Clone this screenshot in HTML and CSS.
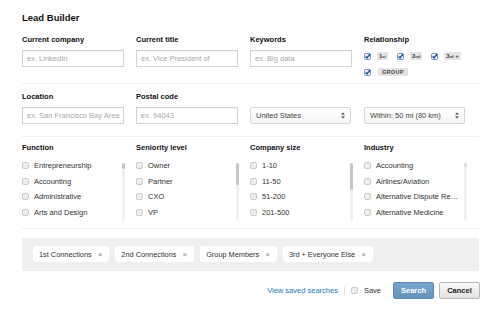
FILE: index.html
```html
<!DOCTYPE html>
<html>
<head>
<meta charset="utf-8">
<link rel="stylesheet" href="styles.css">
</head>
<body>
<div class="page">
  <h1 class="title">Lead Builder</h1>

  <section class="row row-1">
    <div class="field">
      <div class="label">Current company</div>
      <div class="input">ex. LinkedIn</div>
    </div>
    <div class="field">
      <div class="label">Current title</div>
      <div class="input">ex. Vice President of</div>
    </div>
    <div class="field">
      <div class="label">Keywords</div>
      <div class="input">ex. Big data</div>
    </div>
    <div class="field">
      <div class="label">Relationship</div>
      <div class="rel-rows">
        <div class="rel-row">
          <span class="pair">
            <svg class="chk-on" width="7" height="7" viewBox="0 0 7 7"><rect x=".5" y=".5" width="6" height="6" rx="1" fill="#e8f0fa" stroke="#7f97b6"/><path d="M1.6 3.4 L3 5 L6.2 0.8" fill="none" stroke="#1d4b94" stroke-width="1.4"/></svg>
            <span class="badge">1<small>st</small></span>
          </span>
          <span class="pair">
            <svg class="chk-on" width="7" height="7" viewBox="0 0 7 7"><rect x=".5" y=".5" width="6" height="6" rx="1" fill="#e8f0fa" stroke="#7f97b6"/><path d="M1.6 3.4 L3 5 L6.2 0.8" fill="none" stroke="#1d4b94" stroke-width="1.4"/></svg>
            <span class="badge">2<small>nd</small></span>
          </span>
          <span class="pair pair-last">
            <svg class="chk-on" width="7" height="7" viewBox="0 0 7 7"><rect x=".5" y=".5" width="6" height="6" rx="1" fill="#e8f0fa" stroke="#7f97b6"/><path d="M1.6 3.4 L3 5 L6.2 0.8" fill="none" stroke="#1d4b94" stroke-width="1.4"/></svg>
            <span class="badge">3<small>rd</small> +</span>
          </span>
        </div>
        <div class="rel-row">
          <span class="pair">
            <svg class="chk-on" width="7" height="7" viewBox="0 0 7 7"><rect x=".5" y=".5" width="6" height="6" rx="1" fill="#e8f0fa" stroke="#7f97b6"/><path d="M1.6 3.4 L3 5 L6.2 0.8" fill="none" stroke="#1d4b94" stroke-width="1.4"/></svg>
            <span class="badge badge-group">GROUP</span>
          </span>
        </div>
      </div>
    </div>
  </section>

  <section class="row row-2">
    <div class="field">
      <div class="label">Location</div>
      <div class="input">ex. San Francisco Bay Area</div>
    </div>
    <div class="field">
      <div class="label">Postal code</div>
      <div class="input">ex. 94043</div>
    </div>
    <div class="field">
      <div class="label label-empty">&nbsp;</div>
      <div class="select"><span>United States</span><svg width="4" height="7" viewBox="0 0 4 7"><path d="M0 2.8 L2 0.3 L4 2.8Z M0 4.2 L2 6.7 L4 4.2Z" fill="#666"/></svg></div>
    </div>
    <div class="field">
      <div class="label label-empty">&nbsp;</div>
      <div class="select"><span>Within: 50 mi (80 km)</span><svg width="4" height="7" viewBox="0 0 4 7"><path d="M0 2.8 L2 0.3 L4 2.8Z M0 4.2 L2 6.7 L4 4.2Z" fill="#666"/></svg></div>
    </div>
  </section>

  <section class="row row-3">
    <div class="field">
      <div class="label">Function</div>
      <div class="list">
        <ul class="items">
          <li><span class="box"></span>Entrepreneurship</li>
          <li><span class="box"></span>Accounting</li>
          <li><span class="box"></span>Administrative</li>
          <li><span class="box"></span>Arts and Design</li>
        </ul>
        <div class="track"><div class="thumb thumb-fn"></div></div>
      </div>
    </div>
    <div class="field">
      <div class="label">Seniority level</div>
      <div class="list">
        <ul class="items">
          <li><span class="box"></span>Owner</li>
          <li><span class="box"></span>Partner</li>
          <li><span class="box"></span>CXO</li>
          <li><span class="box"></span>VP</li>
        </ul>
        <div class="track"><div class="thumb thumb-sen"></div></div>
      </div>
    </div>
    <div class="field">
      <div class="label">Company size</div>
      <div class="list">
        <ul class="items">
          <li><span class="box"></span>1-10</li>
          <li><span class="box"></span>11-50</li>
          <li><span class="box"></span>51-200</li>
          <li><span class="box"></span>201-500</li>
        </ul>
        <div class="track"><div class="thumb thumb-size"></div></div>
      </div>
    </div>
    <div class="field">
      <div class="label">Industry</div>
      <div class="list">
        <ul class="items">
          <li><span class="box"></span>Accounting</li>
          <li><span class="box"></span>Airlines/Aviation</li>
          <li><span class="box"></span>Alternative Dispute Re…</li>
          <li><span class="box"></span>Alternative Medicine</li>
        </ul>
        <div class="track"><div class="thumb thumb-ind"></div></div>
      </div>
    </div>
  </section>

  <div class="tags">
    <span class="tag">1st Connections<span class="x">×</span></span>
    <span class="tag">2nd Connections<span class="x">×</span></span>
    <span class="tag">Group Members<span class="x">×</span></span>
    <span class="tag">3rd + Everyone Else<span class="x">×</span></span>
  </div>

  <div class="actions">
    <a class="link">View saved searches</a>
    <span class="sep"></span>
    <span class="box"></span>
    <span class="save">Save</span>
    <button class="btn btn-primary">Search</button>
    <button class="btn btn-cancel">Cancel</button>
  </div>
</div>
</body>
</html>
```

FILE: styles.css
```css
* { box-sizing: border-box; }
html, body { margin: 0; padding: 0; background: #fff; }
body {
  font-family: "Liberation Sans", Arial, Helvetica, sans-serif;
  font-size: 7.5px;
  color: #333;
}
.page {
  width: 500px;
  padding: 12px 21px 0 22px;
}
.title {
  margin: 0;
  font-size: 9.5px;
  line-height: 12px;
  font-weight: bold;
  color: #111;
}
.row {
  display: grid;
  grid-template-columns: repeat(4, 103px);
  column-gap: 11px;
  align-items: start;
  border-bottom: 1px solid #efefef;
}
.row-1 { margin-top: 11px; padding-bottom: 5px; }
.row-2 { padding-top: 8px; padding-bottom: 12px; }
.row-3 { padding-top: 6px; padding-bottom: 7px; }

.label {
  font-size: 7.5px;
  line-height: 10px;
  font-weight: bold;
  color: #111;
  margin-bottom: 5px;
  white-space: nowrap;
}
.input {
  width: 102px;
  height: 17px;
  border: 1px solid #d3d3d3;
  box-shadow: inset 0 1px 1px rgba(0,0,0,0.04);
  padding: 0 4px;
  line-height: 15px;
  color: #a9a9a9;
  white-space: nowrap;
  overflow: hidden;
  background: #fff;
}
.select {
  width: 101px;
  height: 17px;
  border: 1px solid #d6d6d6;
  border-radius: 2px;
  background: linear-gradient(#ffffff, #f5f5f5);
  padding: 0 5px 0 5px;
  display: flex;
  align-items: center;
  justify-content: space-between;
  color: #444;
  white-space: nowrap;
}

/* relationship */
.rel-rows { display: flex; flex-direction: column; gap: 4px; }
.rel-row { display: flex; align-items: center; height: 12px; }
.pair { display: inline-flex; align-items: center; margin-right: 9px; }
.pair-last { margin-right: 0; }
.chk-on { display: block; margin-right: 6px; flex: none; }
.badge {
  display: inline-block;
  background: #e4e4e4;
  color: #444;
  font-size: 6px;
  font-weight: bold;
  line-height: 8px;
  height: 8px;
  padding: 0 2px;
  border-radius: 1px;
  white-space: nowrap;
}
.badge small { font-size: 4px; vertical-align: baseline; }
.badge-group { padding: 0 4px; letter-spacing: 0.3px; font-size: 5.5px; }
.pair .badge-group { margin-left: 1px; }

/* lists */
.list {
  margin-top: 3px;
  display: flex;
  justify-content: space-between;
  align-items: flex-start;
  width: 103px;
}
.items { list-style: none; margin: 0; padding: 0; }
.items li {
  display: flex;
  align-items: center;
  height: 15.5px;
  white-space: nowrap;
  color: #333;
}
.box {
  display: inline-block;
  width: 7px;
  height: 7px;
  border: 1px solid #cbcbcb;
  border-radius: 2px;
  background: #eeeeee;
  margin-right: 5px;
  flex: none;
}
.track {
  margin-top: 5px;
  width: 3px;
  height: 58px;
  background: #f1f1f1;
  border-radius: 2px;
  flex: none;
}
.thumb { width: 3px; background: #c6c6c6; border-radius: 2px; }
.thumb-fn { height: 6px; }
.thumb-sen { height: 22px; }
.thumb-size { height: 27px; }
.thumb-ind { height: 4px; background: #dcdcdc; }

/* tags */
.tags {
  margin-top: 9px;
  height: 33px;
  background: #efefef;
  padding: 8px 11px 0 11px;
  display: flex;
  gap: 6px;
  align-items: flex-start;
}
.tag {
  display: inline-flex;
  align-items: center;
  height: 16px;
  background: #fff;
  border-radius: 2px;
  padding: 0 7px 0 6px;
  color: #333;
  font-size: 7.35px;
  white-space: nowrap;
}
.x { margin-left: 6px; color: #888; font-size: 8px; }

/* actions */
.actions {
  margin-top: 11px;
  display: flex;
  justify-content: flex-end;
  align-items: center;
  height: 17px;
}
.link { color: #2a78b5; text-decoration: none; }
.sep {
  display: inline-block;
  width: 1px;
  height: 10px;
  background: #e6e6e6;
  margin: 0 6px 0 6px;
}
.actions .box { margin-right: 6px; }
.save { color: #333; margin-right: 12px; }
.btn {
  height: 17px;
  width: 41px;
  border-radius: 2px;
  font-family: "Liberation Sans", Arial, sans-serif;
  font-size: 7.5px;
  font-weight: bold;
  padding: 0;
  cursor: pointer;
}
.btn-primary {
  background: linear-gradient(#79a6cc, #6393bd);
  border: 1px solid #5b88b0;
  color: #fff;
  margin-right: 5px;
}
.btn-cancel {
  background: linear-gradient(#f9f9f9, #e2e2e2);
  border: 1px solid #b8b8b8;
  color: #222;
  margin-right: -1px;
}
```
